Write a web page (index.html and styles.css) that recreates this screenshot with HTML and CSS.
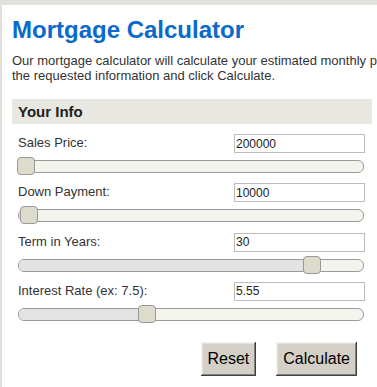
FILE: index.html
```html
<!DOCTYPE html>
<html lang="en">
<head>
<meta charset="utf-8">
<title>Mortgage Calculator</title>
<link rel="stylesheet" href="styles.css">
</head>
<body>
<div class="page">
  <h1 class="title">Mortgage Calculator</h1>
  <p class="intro">Our mortgage calculator will calculate your estimated monthly payment. Enter<br>the requested information and click Calculate.</p>
  <section class="info">
    <h2 class="info-head">Your Info</h2>
    <div class="fields">
      <div class="field">
        <div class="field-row"><label class="field-label">Sales Price:</label><input class="field-input" type="text" value="200000"></div>
        <div class="slider"><div class="range" style="width:0px"></div><span class="handle" style="left:-2px"></span></div>
      </div>
      <div class="field">
        <div class="field-row"><label class="field-label">Down Payment:</label><input class="field-input" type="text" value="10000"></div>
        <div class="slider"><div class="range" style="width:3px"></div><span class="handle" style="left:1px"></span></div>
      </div>
      <div class="field">
        <div class="field-row"><label class="field-label">Term in Years:</label><input class="field-input" type="text" value="30"></div>
        <div class="slider"><div class="range" style="width:292px"></div><span class="handle" style="left:284px"></span></div>
      </div>
      <div class="field">
        <div class="field-row"><label class="field-label">Interest Rate (ex: 7.5):</label><input class="field-input" type="text" value="5.55"></div>
        <div class="slider"><div class="range" style="width:127px"></div><span class="handle" style="left:119px"></span></div>
      </div>
    </div>
    <div class="actions">
      <button class="btn" type="button">Reset</button>
      <button class="btn" type="button">Calculate</button>
    </div>
  </section>
</div>
</body>
</html>
```
FILE: styles.css
```css
html, body {
  margin: 0;
  height: 100%;
  overflow: hidden;
  background: #e2e1dd;
}
body {
  padding: 5px 0 0 2px;
  box-sizing: border-box;
  font-family: "Liberation Sans", Arial, sans-serif;
}
.page {
  background: #fff;
  width: 375px;
  height: 382px;
  box-sizing: border-box;
  padding: 0 10px;
  overflow: hidden;
}
.title {
  margin: 0;
  padding-top: 11px;
  font-size: 24px;
  line-height: 28px;
  font-weight: bold;
  color: #0a6acb;
}
.intro {
  margin: 9px 0 0;
  font-size: 13px;
  line-height: 15px;
  color: #333;
  white-space: nowrap;
}
.info {
  width: 360px;
  margin-top: 16px;
}
.info-head {
  margin: 0;
  height: 25px;
  background: #e8e7e1;
  font-size: 15px;
  font-weight: bold;
  line-height: 25px;
  padding-left: 6px;
  color: #222;
}
.fields {
  padding: 10px 7px 0 6px;
}
.field {
  padding-bottom: 10.33px;
}
.field-row {
  display: flex;
  justify-content: space-between;
  align-items: flex-start;
}
.field-label {
  font-size: 13px;
  line-height: 15px;
  padding-top: 1px;
  color: #333;
}
.field-input {
  width: 131px;
  height: 19px;
  box-sizing: border-box;
  border: 1px solid #bcbcbc;
  padding: 0 1px;
  margin: 0;
  font: 12px "Liberation Sans", Arial, sans-serif;
  color: #222;
  background: #fff;
  outline: none;
}
.slider {
  position: relative;
  margin: 7px 1px 0 0;
  height: 13px;
  box-sizing: border-box;
  border: 1px solid #9a9a9a;
  border-radius: 6px;
  background: #f4f4ee;
}
.range {
  position: absolute;
  left: 0;
  top: 0;
  bottom: 0;
  background: #e3e3e3;
  border-radius: 5px 0 0 5px;
}
.handle {
  position: absolute;
  top: -4px;
  width: 18px;
  height: 18px;
  box-sizing: border-box;
  border: 1px solid #999;
  border-radius: 4px;
  background: #dddbcc;
}
.actions {
  display: flex;
  justify-content: flex-end;
  gap: 20px;
  padding-right: 15px;
  margin-top: 10.7px;
}
.btn {
  height: 34px;
  padding: 0 7px;
  margin: 0;
  font: 16px "Liberation Sans", Arial, sans-serif;
  color: #000;
  background: #d4d0c8;
  border: none;
  border-radius: 0;
  box-shadow: inset -1px -1px #404040, inset 1px 1px #f4f3f0, inset -2px -2px #808080, inset 2px 2px #e4e1db;
}
```
